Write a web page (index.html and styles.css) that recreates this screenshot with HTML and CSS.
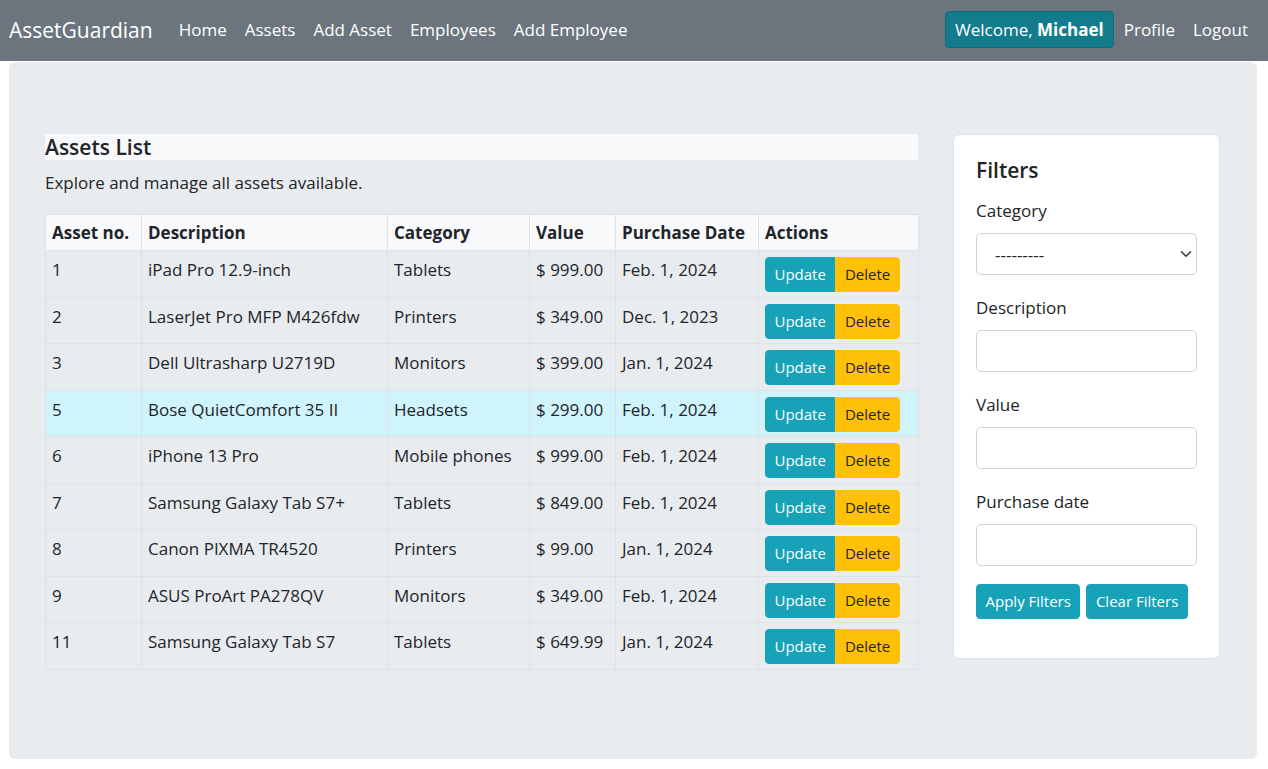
FILE: index.html
```html
<!DOCTYPE html>
<html lang="en">
<head>
<meta charset="utf-8">
<title>AssetGuardian - Assets</title>
<link rel="stylesheet" href="styles.css">
</head>
<body>
<nav class="navbar">
  <a class="brand" href="#">AssetGuardian</a>
  <ul class="nav-links">
    <li><a href="#">Home</a></li>
    <li><a href="#">Assets</a></li>
    <li><a href="#">Add Asset</a></li>
    <li><a href="#">Employees</a></li>
    <li><a href="#">Add Employee</a></li>
  </ul>
  <div class="nav-right">
    <span class="welcome">Welcome, <strong>Michael</strong></span>
    <a href="#">Profile</a>
    <a href="#">Logout</a>
  </div>
</nav>
<main class="page">
  <section class="list">
    <h2 class="list-title">Assets List</h2>
    <p class="lead">Explore and manage all assets available.</p>
    <table class="assets">
      <colgroup>
        <col class="c-no"><col class="c-desc"><col class="c-cat"><col class="c-val"><col class="c-date"><col class="c-act">
      </colgroup>
      <thead>
        <tr><th>Asset no.</th><th>Description</th><th>Category</th><th>Value</th><th>Purchase Date</th><th>Actions</th></tr>
      </thead>
      <tbody>
        <tr><td>1</td><td>iPad Pro 12.9-inch</td><td>Tablets</td><td>$ 999.00</td><td>Feb. 1, 2024</td><td class="act"><div class="btn-group"><button class="btn upd">Update</button><button class="btn del">Delete</button></div></td></tr>
        <tr><td>2</td><td>LaserJet Pro MFP M426fdw</td><td>Printers</td><td>$ 349.00</td><td>Dec. 1, 2023</td><td class="act"><div class="btn-group"><button class="btn upd">Update</button><button class="btn del">Delete</button></div></td></tr>
        <tr><td>3</td><td>Dell Ultrasharp U2719D</td><td>Monitors</td><td>$ 399.00</td><td>Jan. 1, 2024</td><td class="act"><div class="btn-group"><button class="btn upd">Update</button><button class="btn del">Delete</button></div></td></tr>
        <tr class="info"><td>5</td><td>Bose QuietComfort 35 II</td><td>Headsets</td><td>$ 299.00</td><td>Feb. 1, 2024</td><td class="act"><div class="btn-group"><button class="btn upd">Update</button><button class="btn del">Delete</button></div></td></tr>
        <tr><td>6</td><td>iPhone 13 Pro</td><td>Mobile phones</td><td>$ 999.00</td><td>Feb. 1, 2024</td><td class="act"><div class="btn-group"><button class="btn upd">Update</button><button class="btn del">Delete</button></div></td></tr>
        <tr><td>7</td><td>Samsung Galaxy Tab S7+</td><td>Tablets</td><td>$ 849.00</td><td>Feb. 1, 2024</td><td class="act"><div class="btn-group"><button class="btn upd">Update</button><button class="btn del">Delete</button></div></td></tr>
        <tr><td>8</td><td>Canon PIXMA TR4520</td><td>Printers</td><td>$ 99.00</td><td>Jan. 1, 2024</td><td class="act"><div class="btn-group"><button class="btn upd">Update</button><button class="btn del">Delete</button></div></td></tr>
        <tr><td>9</td><td>ASUS ProArt PA278QV</td><td>Monitors</td><td>$ 349.00</td><td>Feb. 1, 2024</td><td class="act"><div class="btn-group"><button class="btn upd">Update</button><button class="btn del">Delete</button></div></td></tr>
        <tr><td>11</td><td>Samsung Galaxy Tab S7</td><td>Tablets</td><td>$ 649.99</td><td>Jan. 1, 2024</td><td class="act"><div class="btn-group"><button class="btn upd">Update</button><button class="btn del">Delete</button></div></td></tr>
      </tbody>
    </table>
  </section>
  <aside class="filters">
    <h3 class="filters-title">Filters</h3>
    <form class="filter-form">
      <label class="field"><span>Category</span>
        <div class="select-wrap">
          <select class="control"><option>---------</option></select>
          <svg class="chev" width="12" height="12" viewBox="0 0 16 16"><path d="M2 5l6 6 6-6" fill="none" stroke="#343a40" stroke-width="2" stroke-linecap="round" stroke-linejoin="round"/></svg>
        </div>
      </label>
      <label class="field"><span>Description</span><input class="control" type="text"></label>
      <label class="field"><span>Value</span><input class="control" type="text"></label>
      <label class="field"><span>Purchase date</span><input class="control" type="text"></label>
      <div class="form-btns">
        <button type="button" class="btn upd solo">Apply Filters</button>
        <button type="button" class="btn upd solo">Clear Filters</button>
      </div>
    </form>
  </aside>
</main>
</body>
</html>
```
FILE: styles.css
```css
* { box-sizing: border-box; }
html, body { margin: 0; padding: 0; }
body {
  font-family: "Open Sans", "Noto Sans", "Liberation Sans", sans-serif;
  font-size: 17px;
  line-height: 24px;
  color: #212529;
  background: #ffffff;
}
a { text-decoration: none; color: inherit; }

.navbar {
  height: 61px;
  background: #6c757d;
  display: flex;
  align-items: center;
  padding: 0 20px 2px 9px;
  color: #fff;
}
.brand { font-size: 21px; margin-right: 17px; }
.nav-links { list-style: none; margin: 0; padding: 0; display: flex; }
.nav-links a { display: block; padding: 0 9px; font-size: 17px; }
.nav-right { margin-left: auto; display: flex; align-items: center; font-size: 17px; }
.welcome {
  background: #127b8c;
  border: 1px solid #0f6e7d;
  border-radius: 4px;
  padding: 6px 9px 4px;
  height: 37px;
  margin-right: 1px;
}
.welcome strong { font-weight: 700; }
.nav-right a { padding: 0 9px; }
.nav-right a:last-child { padding-right: 0; }

.page {
  margin: 1px 11px 11px 9px;
  height: 697px;
  background: #e9ecef;
  border-radius: 6px;
  padding: 72px 36px 0 36px;
  display: flex;
  gap: 35px;
  align-items: flex-start;
}
.list { width: 873px; flex: none; }
.list-title {
  margin: 0;
  background: #f8f9fa;
  font-size: 21px;
  font-weight: 600;
  line-height: 26px;
}
.lead { margin: 11px 0 19px; font-size: 17px; line-height: 24px; }

.assets {
  width: 873px;
  table-layout: fixed;
  border-collapse: collapse;
  font-size: 17px;
}
.c-no { width: 96px; }
.c-desc { width: 246px; }
.c-cat { width: 142px; }
.c-val { width: 86px; }
.c-date { width: 143px; }
.c-act { width: 160px; }
.assets th, .assets td {
  border: 1px solid #dee2e6;
  text-align: left;
  vertical-align: top;
  padding: 7px 6px 9px;
  white-space: nowrap;
}
.assets th { background: #f8f9fa; font-weight: 700; padding: 6px 6px 5px; }
.assets tr.info td { background: #cff4fc; }
.assets td.act { padding: 6px 6px 4.5px; }

.btn-group { display: inline-flex; }
.btn {
  font-family: inherit;
  font-size: 15px;
  line-height: 21px;
  border: 1px solid transparent;
  padding: 6px 9px;
  height: 35px;
  cursor: pointer;
}
.btn-group .btn { padding: 6px 8.5px; }
.btn.upd { background: #17a2b8; border-color: #17a2b8; color: #fff; border-radius: 4px 0 0 4px; }
.btn.del { background: #ffc107; border-color: #ffc107; color: #212529; border-radius: 0 4px 4px 0; }
.btn.solo { border-radius: 4px; }

.filters {
  width: 267px;
  flex: none;
  background: #fff;
  border: 1px solid #dee2e6;
  border-radius: 6px;
  padding: 22px 22px 39px;
}
.filters-title { margin: 0 0 16px; font-size: 21px; font-weight: 600; line-height: 26px; }
.filter-form { display: flex; flex-direction: column; }
.field { display: flex; flex-direction: column; margin-bottom: 21px; }
.field span { display: block; margin-bottom: 10px; font-size: 17px; }
.control {
  width: 100%;
  height: 42px;
  border: 1px solid #ced4da;
  border-radius: 5px;
  background: #fff;
  font-family: inherit;
  font-size: 17px;
  padding: 6px 12px;
  color: #212529;
}
.select-wrap { position: relative; }
select.control { appearance: none; -webkit-appearance: none; padding-left: 18px; }
.chev { position: absolute; right: 5px; top: 15px; pointer-events: none; }
.form-btns { display: flex; gap: 6px; margin-top: -3px; }
.form-btns .btn { padding: 6px 8.5px; }
```
